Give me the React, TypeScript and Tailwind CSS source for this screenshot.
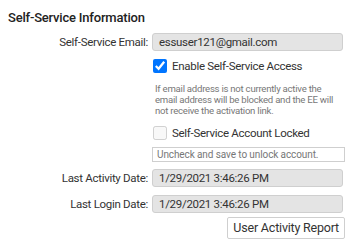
import React from 'react'

const font = { fontFamily: 'Roboto, "Liberation Sans", sans-serif' }

function Label({ children }: { children: React.ReactNode }) {
  return <div className="self-center text-right text-[11.5px] leading-[18px] tracking-[-0.3px] text-[#333]">{children}</div>
}

function ReadOnly({ value }: { value: string }) {
  return (
    <div className="h-[18px] w-[191px] rounded-[3px] border border-[#cfcfcf] bg-[#e4e4e4] px-[6px] text-[11.5px] leading-[16px] tracking-[-0.3px] text-[#333]">
      {value}
    </div>
  )
}

export default function App() {
  return (
    <div className="h-[244px] w-[353px] bg-white pl-[8px] pt-[8px]" style={font}>
      <h2 className="text-[13px] font-medium leading-[20px] tracking-[-0.2px] text-[#222]">Self-Service Information</h2>

      <div className="mt-[5px] grid grid-cols-[140px_1fr] gap-x-[4px]">
        <Label>Self-Service Email:</Label>
        <ReadOnly value="essuser121@gmail.com" />

        <div />
        <label className="mt-[6px] flex items-center gap-[5px] text-[11.5px] leading-[18px] tracking-[-0.3px] text-[#333]">
          <input type="checkbox" defaultChecked className="m-0 ml-[1px] h-[14px] w-[14px]" />
          Enable Self-Service Access
        </label>

        <div />
        <p className="mt-[8px] whitespace-nowrap pl-[3px] text-[9.6px] leading-[11px] tracking-[-0.25px] text-[#777]">
          If email address is not currently active the
          <br />
          email address will be blocked and the EE will
          <br />
          not receive the activation link.
        </p>

        <div />
        <label className="mt-[8px] flex items-center gap-[5px] text-[11.5px] leading-[18px] tracking-[-0.3px] text-[#333]">
          <input type="checkbox" disabled className="m-0 ml-[1px] h-[14px] w-[14px]" />
          Self-Service Account Locked
        </label>

        <div />
        <div className="mb-[7px] mt-[5px] h-[15px] w-[193px] border border-[#cfcfcf] bg-white px-[4px] text-[10px] leading-[13px] tracking-[-0.1px] text-[#777]">
          Uncheck and save to unlock account.
        </div>

        <Label>Last Activity Date:</Label>
        <ReadOnly value="1/29/2021 3:46:26 PM" />

        <div className="col-span-2 h-[8px]" />

        <Label>Last Login Date:</Label>
        <ReadOnly value="1/29/2021 3:46:26 PM" />

        <div />
        <div className="mt-[4px] flex w-[193px] justify-end">
          <button className="h-[22px] rounded-[2px] border border-[#cfcfcf] bg-white px-[5px] text-[12.5px] leading-[20px] tracking-[-0.2px] text-[#333]">
            User Activity Report
          </button>
        </div>
      </div>
    </div>
  )
}
